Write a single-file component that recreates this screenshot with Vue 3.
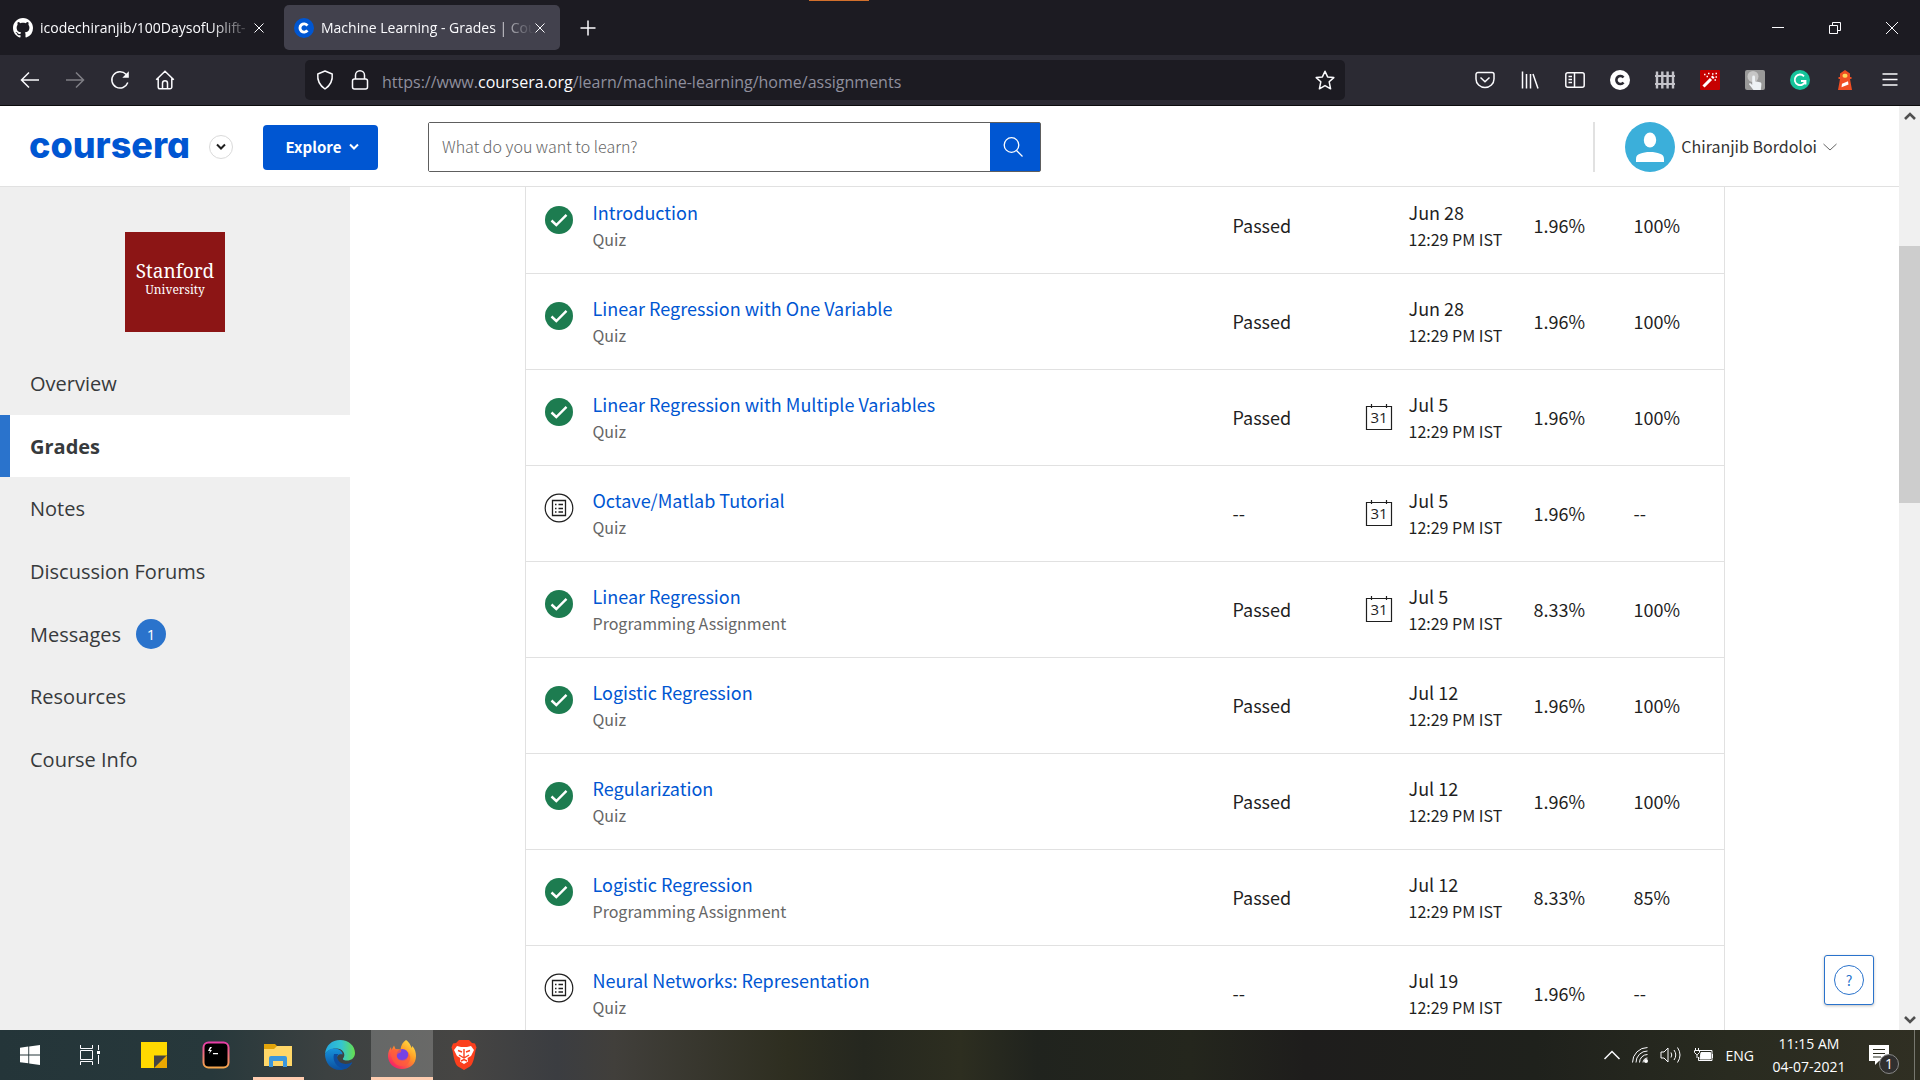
<script setup>
import { ref } from 'vue'

const search = ref('')

const navItems = [
  { label: 'Overview' },
  { label: 'Grades', active: true },
  { label: 'Notes' },
  { label: 'Discussion Forums' },
  { label: 'Messages', count: 1 },
  { label: 'Resources' },
  { label: 'Course Info' },
]

const quiz = 'Quiz'
const programming = 'Programming Assignment'

const assignments = [
  { title: 'Introduction', kind: quiz, date: 'Jun 28', weight: '1.96%', grade: '100%' },
  { title: 'Linear Regression with One Variable', kind: quiz, date: 'Jun 28', weight: '1.96%', grade: '100%' },
  { title: 'Linear Regression with Multiple Variables', kind: quiz, date: 'Jul 5', calendar: true, weight: '1.96%', grade: '100%' },
  { title: 'Octave/Matlab Tutorial', kind: quiz, date: 'Jul 5', calendar: true, weight: '1.96%' },
  { title: 'Linear Regression', kind: programming, date: 'Jul 5', calendar: true, weight: '8.33%', grade: '100%' },
  { title: 'Logistic Regression', kind: quiz, date: 'Jul 12', weight: '1.96%', grade: '100%' },
  { title: 'Regularization', kind: quiz, date: 'Jul 12', weight: '1.96%', grade: '100%' },
  { title: 'Logistic Regression', kind: programming, date: 'Jul 12', weight: '8.33%', grade: '85%' },
  { title: 'Neural Networks: Representation', kind: quiz, date: 'Jul 19', weight: '1.96%' },
]
</script>

<template>
  <div class="screen">
    <header class="tabs">
      <div class="tab">
        <svg class="favicon" width="20" height="20" viewBox="0 0 16 16" fill="#fff"><path d="M8 0C3.58 0 0 3.58 0 8c0 3.54 2.29 6.53 5.47 7.59.4.07.55-.17.55-.38 0-.19-.01-.82-.01-1.49-2.01.37-2.53-.49-2.69-.94-.09-.23-.48-.94-.82-1.13-.28-.15-.68-.52-.01-.53.63-.01 1.08.58 1.23.82.72 1.21 1.87.87 2.33.66.07-.52.28-.87.51-1.07-1.78-.2-3.64-.89-3.64-3.95 0-.87.31-1.59.82-2.15-.08-.2-.36-1.02.08-2.12 0 0 .67-.21 2.2.82.64-.18 1.32-.27 2-.27s1.36.09 2 .27c1.53-1.04 2.2-.82 2.2-.82.44 1.1.16 1.92.08 2.12.51.56.82 1.27.82 2.15 0 3.07-1.87 3.75-3.65 3.95.29.25.54.73.54 1.48 0 1.07-.01 1.93-.01 2.2 0 .21.15.46.55.38A8.01 8.01 0 0 0 16 8c0-4.42-3.58-8-8-8z" /></svg>
        <span class="tab-title">icodechiranjib/100DaysofUplift-</span>
        <button class="plain" aria-label="Close tab"><svg width="12" height="12" viewBox="0 0 12 12" class="line thin"><path d="M1.5 1.5l9 9m0-9l-9 9" /></svg></button>
      </div>
      <div class="tab active">
        <svg class="favicon" width="20" height="20" viewBox="0 0 20 20"><circle cx="10" cy="10" r="10" fill="#0056d2" /><path d="M13.4 7.6a4.1 4.1 0 1 0 0 4.8" fill="none" stroke="#fff" stroke-width="2.9" /></svg>
        <span class="tab-title">Machine Learning - Grades | Cou</span>
        <button class="plain" aria-label="Close tab"><svg width="12" height="12" viewBox="0 0 12 12" class="line thin"><path d="M1.5 1.5l9 9m0-9l-9 9" /></svg></button>
      </div>
      <button class="plain new-tab" aria-label="New tab"><svg width="16" height="16" viewBox="0 0 16 16" class="line"><path d="M8 .5v15M.5 8h15" /></svg></button>
      <div class="window-controls">
        <button class="plain" aria-label="Minimize"><svg width="14" height="14" viewBox="0 0 14 14" class="line thin"><path d="M1 6.5h12" /></svg></button>
        <button class="plain" aria-label="Restore"><svg width="14" height="14" viewBox="0 0 14 14" class="line thin"><path d="M1.5 4.5h8v8h-8zM4.500 4.500v-3h8v8h-3" /></svg></button>
        <button class="plain" aria-label="Close"><svg width="14" height="14" viewBox="0 0 14 14" class="line thin"><path d="M1 1l12 12M13 1L1 13" /></svg></button>
      </div>
      <div class="top-mark"></div>
    </header>

    <div class="toolbar">
      <div class="nav-buttons">
        <button class="plain" aria-label="Back"><svg width="20" height="20" viewBox="0 0 20 20" class="line"><path d="M19 10H1.500M9 2.500L1.500 10 9 17.500" /></svg></button>
        <button class="plain dim" aria-label="Forward"><svg width="20" height="20" viewBox="0 0 20 20" class="line"><path d="M1 10h17.500M11 2.500l7.500 7.500-7.500 7.500" /></svg></button>
        <button class="plain" aria-label="Reload"><svg width="20" height="20" viewBox="0 0 20 20" class="line"><path d="M17.800 12.500A8.200 8.200 0 1 1 16 4.200L17.500 6" /><path d="M18.800 1.200v6.500h-6.500z" fill="#fbfbfe" stroke="none" /></svg></button>
        <button class="plain" aria-label="Home"><svg width="20" height="20" viewBox="0 0 20 20" class="line"><path d="M1.200 9.800L10 1.200l8.800 8.600M3.200 8.500v8.500a1.800 1.800 0 0 0 1.800 1.800h10a1.800 1.800 0 0 0 1.800-1.800V8.500M7.500 18.500v-5.300a2.500 2.500 0 0 1 5 0v5.300" /></svg></button>
      </div>
      <div class="url-bar">
        <svg width="20" height="20" viewBox="0 0 20 20" class="line"><path d="M10 1l7.200 3c.6 6-1.200 11-7.200 15-6-4-7.800-9-7.200-15z" stroke-linejoin="round" /></svg>
        <svg width="20" height="20" viewBox="0 0 20 20" class="line"><rect x="2.500" y="9" width="15" height="10" rx="2" /><path d="M5.500 9V5.300a4.500 4.500 0 0 1 9 0V9" /></svg>
        <span class="url">https://www.<b>coursera.org</b>/learn/machine-learning/home/assignments</span>
        <button class="plain star" aria-label="Bookmark this page"><svg width="20" height="20" viewBox="0 0 20 20" class="line"><path d="M10 1.200l2.600 5.700 6.200.7-4.600 4.200 1.400 7L10 15.600l-5.600 3.200 1.400-7L1.200 7.600l6.200-.7z" stroke-linejoin="round" /></svg></button>
      </div>
      <div class="extensions">
        <button class="plain" aria-label="Pocket"><svg width="20" height="20" viewBox="0 0 20 20" class="line"><path d="M3 2.500h14a2 2 0 0 1 2 2V9a9 8.500 0 0 1-18 0V4.500a2 2 0 0 1 2-2zM5.500 7.500L10 11.800l4.500-4.300" /></svg></button>
        <button class="plain" aria-label="Library"><svg width="20" height="20" viewBox="0 0 20 20" class="line"><path d="M2.500 1.500v17M6.500 4v14.500M10.500 4v14.500M13 4l5 14.500" /></svg></button>
        <button class="plain" aria-label="Sidebars"><svg width="20" height="20" viewBox="0 0 20 20" class="line"><rect x=".8" y="2.800" width="18.400" height="14.400" rx="2" /><path d="M9.500 3v14M3.500 6.500h3.500M3.500 9.500h3.500M3.500 12.500h3.500" /></svg></button>
        <button class="plain" aria-label="C extension"><svg width="20" height="20" viewBox="0 0 20 20"><circle cx="10" cy="10" r="10" fill="#fff" /><path d="M13.500 7.500a4 4 0 1 0 0 5" fill="none" stroke="#2b2a33" stroke-width="2.600" /></svg></button>
        <button class="plain" aria-label="Fence extension"><svg width="20" height="20" viewBox="0 0 20 20" fill="none" stroke="#c4c3ca"><path d="M2 1.500v17M7.300 1.500v17M12.600 1.500v17M18 1.500v17" stroke-width="2.400" /><path d="M0 6h20M0 14h20" stroke-width="1.800" /></svg></button>
        <button class="plain" aria-label="Magic wand extension"><svg width="20" height="20" viewBox="0 0 20 20"><rect width="20" height="20" rx="1" fill="#c60000" /><path d="M3.500 16.500l7.500-7.500" stroke="#fff" stroke-width="3" /><path d="M12 8l1.500-1.500" stroke="#fff" stroke-width="3" /><path d="M4 4.500h1.500M8 3.500h1.500M6.500 6.500h1.500M12 4h1.500M15.500 3.500h1.500M15.500 7h1.500M14.500 10h1.500" stroke="#fff" stroke-width="1.500" /></svg></button>
        <button class="plain" aria-label="Click extension"><svg width="20" height="20" viewBox="0 0 20 20"><rect width="20" height="20" rx="2" fill="#999" /><circle cx="8" cy="6.500" r="5.500" fill="#c6c6c6" /><path d="M7.200 7a1.400 1.400 0 0 1 2.800 0v4.200l5 1c1.200.3 1.500 1 1.400 2.200L15.800 20H8.500L4.200 14.600c-.6-1 .7-1.800 1.600-1L7.200 15z" fill="#eef2f5" /></svg></button>
        <button class="plain" aria-label="Grammar extension"><svg width="20" height="20" viewBox="0 0 20 20"><circle cx="10" cy="10" r="10" fill="#15c39a" /><path d="M14 6.300A5.300 5.300 0 1 0 15.200 11M11 11h4.500v3.500" fill="none" stroke="#fff" stroke-width="1.800" /></svg></button>
        <button class="plain" aria-label="Lighthouse extension"><svg width="20" height="20" viewBox="0 0 20 20"><path d="M10 0l5 3.500V7h1.500v2H15l2 11H3L5 9H3.500V7H5V3.500z" fill="#f04e23" /><rect x="7.500" y="3.800" width="5" height="4" rx="2" fill="#ffd55c" /><path d="M7 13.800l6-2.600.5 3.300-7 2.800z" fill="#fff" /></svg></button>
        <button class="plain" aria-label="Menu"><svg width="20" height="20" viewBox="0 0 20 20" class="line"><path d="M2.500 4h15M2.500 9.500h15M2.500 15h15" /></svg></button>
      </div>
    </div>

    <div class="page">
      <div class="site">
        <header class="site-header">
          <a href="#" class="brand">coursera</a>
          <button class="round" aria-label="More"><svg width="10" height="8" viewBox="0 0 10 8" fill="none" stroke="#1f1f1f" stroke-width="2"><path d="M1 1.500l4 4 4-4" /></svg></button>
          <button class="explore"><span>Explore</span><svg width="10" height="8" viewBox="0 0 10 8" fill="none" stroke="#fff" stroke-width="2"><path d="M1 1.500l4 4 4-4" /></svg></button>
          <form class="search" @submit.prevent>
            <input v-model="search" type="text" aria-label="Search" placeholder="What do you want to learn?" />
            <button aria-label="Submit search"><svg width="20" height="20" viewBox="0 0 20 20" fill="none" stroke="#fff" stroke-width="1.300"><circle cx="8.500" cy="8" r="7.300" /><path d="M13.500 13.500l6 6" /></svg></button>
          </form>
          <button class="user">
            <svg width="50" height="50" viewBox="0 0 50 50"><circle cx="25" cy="25" r="25" fill="#3bafda" /><ellipse cx="25" cy="18" rx="6.200" ry="7.500" fill="#fff" /><path d="M11 40v-3c0-3 1.500-4.500 4-5.200 3-1.200 6-1.800 10-1.800s7 .6 10 1.800c2.500.7 4 2.200 4 5.200v3z" fill="#fff" /></svg>
            <span>Chiranjib Bordoloi</span>
            <svg width="14" height="8" viewBox="0 0 14 8" fill="none" stroke="#666"><path d="M.5 1l6.500 6 6.500-6" /></svg>
          </button>
        </header>

        <div class="body">
          <aside class="sidebar">
            <div class="school"><span class="school-name">Stanford</span><span class="school-kind">University</span></div>
            <nav>
              <a v-for="item in navItems" :key="item.label" href="#" :class="{ current: item.active }">
                {{ item.label }}<span v-if="item.count" class="count">{{ item.count }}</span>
              </a>
            </nav>
          </aside>

          <main>
            <table>
              <colgroup>
                <col class="c-icon" /><col /><col class="c-status" /><col class="c-cal" /><col class="c-date" /><col class="c-weight" /><col class="c-grade" />
              </colgroup>
              <tbody>
                <tr v-for="(a, i) in assignments" :key="i">
                  <td class="state">
                    <svg v-if="a.grade" width="30" height="30" viewBox="0 0 30 30"><circle cx="15" cy="15" r="14" fill="#1d7c50" /><path d="M7.500 15.500l4.800 4.500L22.500 9.800" fill="none" stroke="#fff" stroke-width="2.400" /></svg>
                    <svg v-else width="30" height="30" viewBox="0 0 30 30" fill="none" stroke="#1f1f1f"><circle cx="15" cy="15" r="13.800" stroke-width="1.200" /><path d="M8.500 7.500h13v15h-13z" stroke-width="1.300" /><path d="M11 11.500h1.500M11 15.500h1.500M11 19h1.500M14.500 11.500H19M14.500 15.500H19M14.500 19H19" stroke-width="1.500" /></svg>
                  </td>
                  <td class="name"><a href="#">{{ a.title }}</a><div class="kind">{{ a.kind }}</div></td>
                  <td>{{ a.grade ? 'Passed' : '--' }}</td>
                  <td class="remind">
                    <svg v-if="a.calendar" class="calendar" width="28" height="28" viewBox="0 0 28 28"><path d="M1.500 3.500h25v23h-25zM6.500 1v4M21.500 1v4" fill="none" stroke="#1f1f1f" stroke-width="1.200" /><text x="14" y="20" text-anchor="middle" font-size="15" fill="#1f1f1f">31</text></svg>
                  </td>
                  <td><div>{{ a.date }}</div><div class="time">12:29 PM IST</div></td>
                  <td>{{ a.weight }}</td>
                  <td>{{ a.grade || '--' }}</td>
                </tr>
              </tbody>
            </table>
            <button class="help" aria-label="Help"><span>?</span></button>
          </main>
        </div>
      </div>

      <div class="scrollbar">
        <svg width="12" height="10" viewBox="0 0 12 10" fill="none" stroke="#505050" stroke-width="2.600"><path d="M1 8l5-5 5 5" /></svg>
        <div class="thumb"></div>
        <svg width="12" height="10" viewBox="0 0 12 10" fill="none" stroke="#505050" stroke-width="2.600"><path d="M1 2l5 5 5-5" /></svg>
      </div>
    </div>

    <footer class="taskbar">
      <button class="system" aria-label="Start"><svg width="20" height="20" viewBox="0 0 20 20" fill="#fff"><path d="M0 2.700l8.300-1.100v7.900H0zM9.200 1.500L20 0v9.500H9.200zM0 10.400h8.300v7.900L0 17.200zM9.200 10.400H20V20L9.200 18.500z" /></svg></button>
      <button class="system" aria-label="Task view"><svg width="20" height="20" viewBox="0 0 20 20" class="line thin"><path d="M.5 5.500h12v9H.5zM.5 0v3.500h12V0M.5 20v-3.500h12V20M18.500 0v5M18.500 10v9" /><path d="M17 6h3v3h-3z" fill="#fff" stroke="none" /></svg></button>
      <div class="apps">
        <button aria-label="Sticky Notes"><svg width="26" height="26" viewBox="0 0 26 26"><path d="M0 0h26v13L13 26H0z" fill="#ffd900" /><path d="M26 13v13H13z" fill="#eba800" /><path d="M13 13.500h12.500L13 26z" fill="#444" /></svg></button>
        <button aria-label="Terminal"><svg width="28" height="28" viewBox="0 0 28 28"><defs><linearGradient id="termEdge" x2="0" y2="1"><stop stop-color="#e83da8" /><stop offset="1" stop-color="#f5a64c" /></linearGradient></defs><rect x="1.500" y="1.500" width="25" height="25" rx="5" fill="#000" stroke="url(#termEdge)" stroke-width="2" /><path d="M8 6l-2 4h2l-1 3 3-4H8l2-3zM11 12h5v1.300h-5z" fill="#fff" /></svg></button>
        <button class="open" aria-label="File Explorer"><svg width="28" height="26" viewBox="0 0 28 26"><path d="M0 2h11l3 3v5H0z" fill="#e2a40a" /><path d="M0 7h10l3-3h15v20H0z" fill="#ffd768" /><path d="M5 24V16q0-2 2-2h14q2 0 2 2v9h-4v-6H9v6H5z" fill="#3b97dc" /></svg></button>
        <button aria-label="Edge"><svg width="30" height="30" viewBox="0 0 30 30"><defs><linearGradient id="edgeTop"><stop stop-color="#23a7e0" /><stop offset=".55" stop-color="#35c5cf" /><stop offset="1" stop-color="#66df4d" /></linearGradient><linearGradient id="edgeSide" x2="0" y2="1"><stop stop-color="#1793dc" /><stop offset="1" stop-color="#0b4f9f" /></linearGradient></defs><path d="M0 14C1 5 7 0 15 0c9 0 15 6 15 13 0 5-4 7.500-8 7.500-3.500 0-5-1.200-3.500-2.700 2-2.800.5-7.800-5-9C8 7.500 2.500 10 0 14z" fill="url(#edgeTop)" /><path d="M0 14c2-4 6-6 10-5.500 5 .5 8 3.500 7.500 6-4-1-6.500 2-5 5.500 2 5 8 6.500 14.500 3-3 5-7.500 7-12 7C6 30 0 23 0 14z" fill="url(#edgeSide)" /><path d="M9 14c-2 7 3 14 11 15 3-1 6-4 7.500-7-6 3.500-13 2-15-3-1-2.500 0-4 1-5z" fill="#0d4da0" /></svg></button>
        <button class="open focused" aria-label="Firefox"><svg width="30" height="30" viewBox="0 0 30 30"><defs><linearGradient id="foxBody" x1="1" x2=".2" y2="1"><stop stop-color="#fff44f" /><stop offset=".45" stop-color="#ff9a24" /><stop offset="1" stop-color="#f5156c" /></linearGradient></defs><path d="M19 0c4 3 5 6 5.500 8l.8-2C28 9 29 12.500 29 16c0 8-6 13-14 13S1 23 1 16C1 12 2.500 9 4 7l.5 3L7 5.500 8.500 9l5 .5C14 5 16 2 19 0z" fill="url(#foxBody)" /><circle cx="15.500" cy="15" r="6" fill="#7542e5" /><path d="M4 10c4-1.500 7-.5 10 0 1 2-1 3-3 3.500C8 17 11 20 15 20c4 0 7-3 6-8 5 6 1 14-6 14-8 0-12-8-11-16z" fill="#ff5a3c" opacity=".7" /></svg></button>
        <button aria-label="Brave"><svg width="26" height="30" viewBox="0 0 26 30"><path d="M8 0h10l3 3 3 .5 1.500 4-1 3C23 19 22 24 19 26.500L13 30l-6-3.500C4 24 3 19 1.500 10.500l-1-3L2 3.500 5 3z" fill="#fb3f1d" /><path d="M6 6l4 1h6l4-1 3 4-3 6-3.500 2 .5 3.500L13 24l-4-2.500.5-3.500L6 16l-3-6z" fill="#fff" /><path d="M7 10.500l4 1.500M19 10.500L15 12M13 9v8M8 15l5 3 5-3M10 21l3-1.500 3 1.500" fill="none" stroke="#fb3f1d" stroke-width="1.400" /></svg></button>
      </div>
      <div class="tray">
        <svg width="16" height="10" viewBox="0 0 16 10" class="line"><path d="M.5 9L8 1.500 15.500 9" /></svg>
        <svg width="16" height="16" viewBox="0 0 16 16" class="line thin"><path d="M.5 15.500A15 15 0 0 1 15.500.5M4 15.500A11.500 11.500 0 0 1 15.500 4M7.500 15.500a8 8 0 0 1 8-8M11 15.500a4.500 4.500 0 0 1 4.500-4.500" /><circle cx="14" cy="14" r="2" fill="#fff" stroke="none" /></svg>
        <svg width="22" height="18" viewBox="0 0 22 18" class="line thin"><path d="M1 6h3l4-4v14l-4-4H1zM11 6.500q1.500 2.500 0 5M14 4q3.500 5 0 10M17.500 1.500q5 7.500 0 15" /></svg>
        <svg width="20" height="16" viewBox="0 0 20 16" class="line thin"><path d="M5 3.500h13v10H4.500V10M18.500 7v4M1.500 1v2.500M4.500 1v2.500M.5 3.500h5v2l-2 2h-1l-2-2zM3 7.500V11" /><path d="M7 5.500h9.500v6.500H6z" fill="#fff" /></svg>
        <span class="lang">ENG</span>
        <div class="clock"><div>11:15 AM</div><div>04-07-2021</div></div>
        <button class="plain notice" aria-label="Notifications">
          <svg width="20" height="20" viewBox="0 0 20 20"><path d="M0 0h20v16H10l-4 4v-4H0z" fill="#fff" /><path d="M4 4.500h12M4 8.500h12M4 12h8" stroke="#2b2c20" stroke-width="1.200" /></svg>
          <span>1</span>
        </button>
        <div class="peek"></div>
      </div>
    </footer>
  </div>
</template>

<style>
body {
  margin: 0;
}
</style>

<style scoped>
.screen {
  height: 100vh;
  display: grid;
  grid-template-rows: 55px 51px minmax(0, 1fr) 50px;
  overflow: hidden;
  font-family: "Open Sans", "Noto Sans", sans-serif;
}
* {
  box-sizing: border-box;
}
svg {
  display: block;
  flex: none;
}
button {
  font: inherit;
  padding: 0;
  border: 0;
  cursor: pointer;
}
a {
  text-decoration: none;
}
.plain {
  display: flex;
  align-items: center;
  justify-content: center;
  background: none;
  flex: none;
}
.line {
  fill: none;
  stroke: #fbfbfe;
  stroke-width: 1.5;
}
.thin {
  stroke-width: 1;
}

/* Tab strip */
.tabs {
  position: relative;
  display: flex;
  align-items: center;
  background: #1c1b22;
  color: #fbfbfe;
  font-size: 14px;
}
.tab {
  display: flex;
  align-items: center;
  width: 276px;
  height: 45px;
  padding: 0 14px 0 10px;
  border-radius: 5px;
}
.tab:first-child {
  width: 284px;
  padding: 0 19px 0 13px;
}
.tab.active {
  background: #42414d;
}
.tab-title {
  flex: 1;
  min-width: 0;
  margin-left: 7px;
  white-space: nowrap;
  mask-image: linear-gradient(to right, #000 80%, transparent);
}
.new-tab {
  margin-left: 20px;
}
.window-controls {
  display: flex;
  margin-left: auto;
}
.window-controls button {
  width: 57px;
  height: 50px;
}
.top-mark {
  position: absolute;
  top: 0;
  left: 809px;
  width: 60px;
  height: 1px;
  background: #d2702c;
}

/* Navigation toolbar */
.toolbar {
  display: flex;
  align-items: center;
  background: #2b2a33;
  border-bottom: 1px solid #0c0c0d;
}
.nav-buttons {
  display: flex;
  gap: 25px;
  padding-left: 20px;
  width: 305px;
}
.dim {
  opacity: 0.4;
}
.url-bar {
  flex: 1;
  display: flex;
  align-items: center;
  height: 40px;
  padding: 0 10px;
  gap: 15px;
  border-radius: 5px;
  background: #1c1b22;
}
.url {
  flex: 1;
  margin-left: -3px;
  padding-top: 3px;
  color: #8f8f9d;
  font-size: 16px;
  white-space: nowrap;
}
.url b {
  font-weight: 400;
  color: #fbfbfe;
}
.extensions {
  display: flex;
  gap: 25px;
  padding: 0 20px 0 130px;
}

/* Site */
.page {
  display: flex;
  background: #fff;
}
.site {
  flex: 1;
  min-width: 0;
  display: flex;
  flex-direction: column;
  font-family: "Noto Sans CJK SC", sans-serif;
  color: #1f1f1f;
}
.site-header {
  flex: none;
  display: flex;
  align-items: center;
  height: 81px;
  padding: 2px 62px 0 29px;
  border-bottom: 1px solid #e1e1e1;
}
.brand {
  width: 180px;
  padding-bottom: 4px;
  color: #0056d2;
  font-family: Inter, sans-serif;
  font-size: 36px;
  font-weight: 800;
  line-height: 40px;
  font-feature-settings: "cv11";
}
.round {
  display: flex;
  align-items: center;
  justify-content: center;
  width: 24px;
  height: 24px;
  border: 1px solid #dadada;
  border-radius: 50%;
  background: #fff;
}
.explore {
  display: flex;
  align-items: center;
  justify-content: center;
  gap: 8px;
  width: 115px;
  height: 45px;
  margin: 0 50px 0 30px;
  padding-left: 4px;
  border-radius: 4px;
  background: #0056d2;
  color: #fff;
  font-size: 15px;
  font-weight: 700;
}
.explore span,
.user span {
  padding-bottom: 2px;
}
.search {
  display: flex;
  width: 613px;
  height: 50px;
  border: 1px solid #5e5e5e;
  border-radius: 2px;
}
.search input {
  flex: 1;
  min-width: 0;
  padding: 0 13px 2px;
  border: 0;
  outline: 0;
  background: #fff;
  color: #1f1f1f;
  font-family: inherit;
  font-size: 16px;
  font-weight: 300;
}
.search input::placeholder {
  color: #666;
  opacity: 1;
}
.search button {
  display: flex;
  align-items: center;
  justify-content: center;
  width: 50px;
  padding-right: 4px;
  background: #0056d2;
}
.user {
  display: flex;
  align-items: center;
  gap: 6px;
  height: 50px;
  margin-left: auto;
  padding-left: 30px;
  border-left: 2px solid #e1e1e1;
  background: none;
  color: #333;
  font-size: 16px;
}
.body {
  flex: 1;
  min-height: 0;
  display: flex;
}
.sidebar {
  width: 350px;
  flex: none;
  padding-top: 45px;
  background: #efefef;
  font-family: "Open Sans", sans-serif;
}
.school {
  display: flex;
  flex-direction: column;
  align-items: center;
  width: 100px;
  height: 100px;
  margin: 0 auto 20px;
  padding-top: 27px;
  background: #8c1515;
  color: #fff;
  font-family: "Noto Serif", "DejaVu Serif", serif;
}
.school-name {
  font-size: 19px;
  line-height: 24px;
}
.school-kind {
  font-size: 12px;
  line-height: 14px;
}
nav {
  display: flex;
  flex-direction: column;
  height: 439px;
}
nav a {
  flex: 1;
  display: flex;
  align-items: center;
  padding-left: 30px;
  color: #373a3c;
  font-size: 20px;
}
nav a.current {
  padding-left: 20px;
  border-left: 10px solid #2a73cc;
  background: #fff;
  font-weight: 700;
}
.count {
  width: 30px;
  margin-left: 15px;
  border-radius: 50%;
  background: #2a73cc;
  color: #fff;
  font-size: 15px;
  line-height: 30px;
  text-align: center;
}
main {
  position: relative;
  flex: 1;
  min-width: 0;
  overflow: hidden;
}
table {
  width: calc(100% - 60px);
  max-width: 1200px;
  margin: -9px auto 0;
  border-collapse: separate;
  border-spacing: 0;
  table-layout: fixed;
  border: 1px solid #e1e1e1;
  border-width: 0 1px;
  font-size: 18px;
  line-height: 27px;
}
.c-icon {
  width: 67px;
}
.c-status {
  width: 132px;
}
.c-cal {
  width: 44px;
}
.c-date {
  width: 125px;
}
.c-weight {
  width: 100px;
}
.c-grade {
  width: 90px;
}
td {
  height: 96px;
  padding: 0;
  border-bottom: 1px solid #e1e1e1;
}
.state {
  vertical-align: top;
  padding: 27px 0 0 18px;
}
.name a {
  color: #0056d2;
}
.kind,
.time {
  font-size: 16px;
}
.kind {
  color: #666;
}
.remind {
  padding-bottom: 2px;
}
.calendar {
  font-family: "Open Sans", sans-serif;
}
.help {
  position: absolute;
  right: 25px;
  bottom: 25px;
  display: flex;
  align-items: center;
  justify-content: center;
  width: 50px;
  height: 50px;
  border: 1px solid #2a73cc;
  border-radius: 3px;
  background: #fff;
  box-shadow: 0 1px 3px rgba(0, 0, 0, 0.25);
}
.help span {
  width: 30px;
  border: 1px solid #2a73cc;
  border-radius: 50%;
  color: #2a73cc;
  font-size: 14px;
  line-height: 28px;
}
.scrollbar {
  display: flex;
  flex-direction: column;
  align-items: center;
  width: 21px;
  padding: 5px 0;
  background: #f0f0f0;
}
.thumb {
  width: 21px;
  height: 257px;
  margin: 125px 0 auto;
  background: #cdcdcd;
}

/* Taskbar */
.taskbar {
  display: flex;
  background: linear-gradient(to right, #243539 0%, #27383b 11%, #3c4141 17%, #464543 24%, #3b3d41 29%, #413f3b 32%, #2e2e20 41%, #25271f 45%, #2d2e20 50%, #20231e 54%, #24261d 62%, #1e1d1c 68%, #1f211c 80%, #292b20 90%, #302f23 100%);
  color: #fff;
}
.taskbar > button,
.apps button {
  display: flex;
  align-items: center;
  justify-content: center;
  background: none;
}
.system {
  width: 60px;
}
.apps {
  display: flex;
  margin-left: 3px;
}
.apps button {
  width: 62px;
}
.apps .open {
  background: linear-gradient(#ffcdb0, #ffcdb0) center bottom / 51px 3px no-repeat;
}
.apps .focused {
  background-size: 62px 3px;
  background-color: rgba(255, 255, 255, 0.2);
}
.tray {
  display: flex;
  align-items: center;
  margin-left: auto;
  font-size: 14px;
}
.tray > svg {
  margin-right: 12px;
}
.clock {
  width: 76px;
  margin: 0 22px 0 17px;
  line-height: 23px;
  text-align: center;
}
.notice {
  position: relative;
  color: #fff;
}
.notice span {
  position: absolute;
  left: 10px;
  top: 9px;
  width: 20px;
  border: 1px solid #888;
  border-radius: 50%;
  background: #302f2f;
  line-height: 18px;
}
.peek {
  align-self: stretch;
  width: 6px;
  margin-left: 25px;
  border-left: 1px solid #77776f;
}
</style>
